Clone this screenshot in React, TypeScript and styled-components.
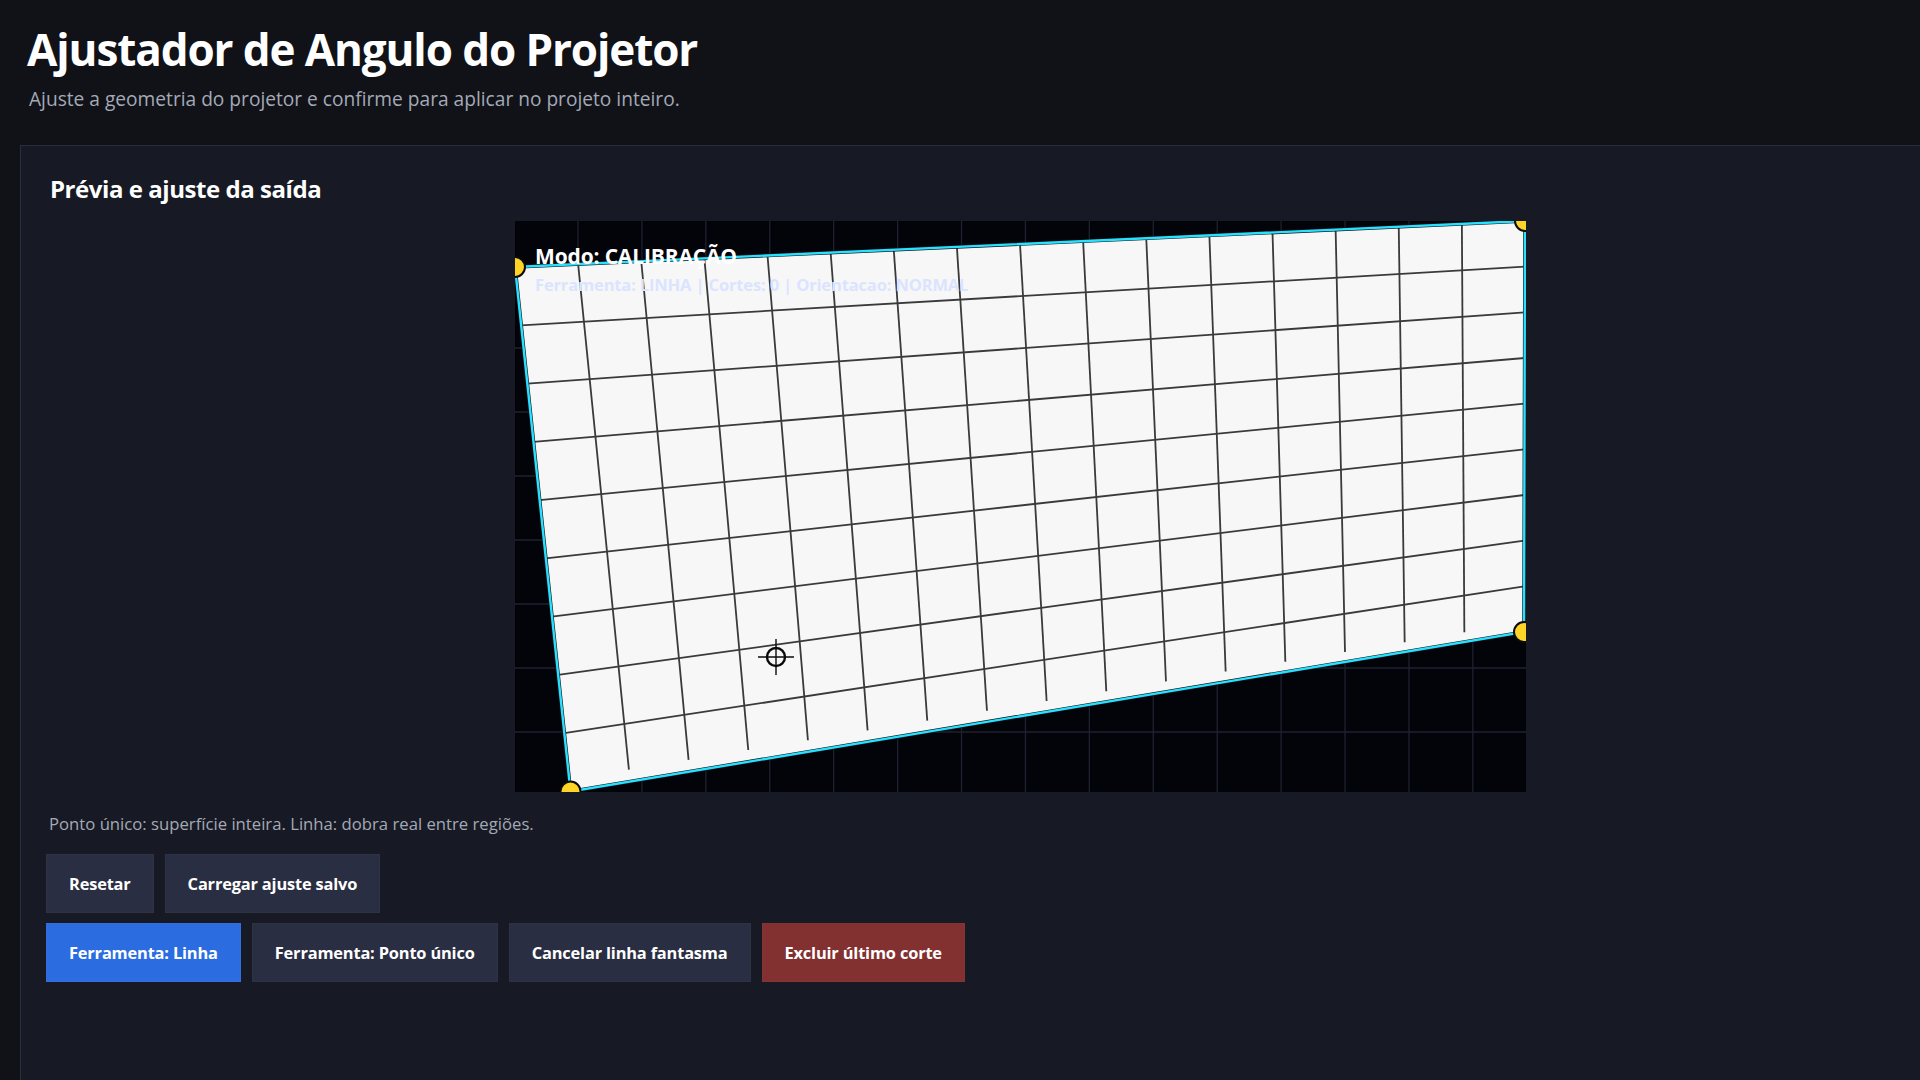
import React from "react";
import styled, { createGlobalStyle } from "styled-components";

const Global = createGlobalStyle`
  html, body { margin: 0; padding: 0; width: 100%; height: 100%; overflow: hidden; background: #101218; }
  body { font-family: "Open Sans", "Noto Sans", "Liberation Sans", sans-serif; color: #fff; }
  #root { width: 100%; height: 100%; }
`;

const Page = styled.div`
  width: 100%;
  height: 100%;
  overflow: hidden;
  background: #101218;
`;

const Header = styled.header`
  height: 145px;
  box-sizing: border-box;
  padding: 22px 0 0 27px;
`;

const Title = styled.h1`
  margin: 0;
  font-size: 44px;
  line-height: 54px;
  font-weight: 700;
  color: #fff;
  letter-spacing: -1.1px;
  white-space: nowrap;
`;

const Subtitle = styled.p`
  margin: 10px 0 0 2px;
  font-size: 19.15px;
  line-height: 26px;
  color: #a4a9b6;
  white-space: nowrap;
`;

const Panel = styled.section`
  margin-left: 20px;
  width: 2001px;
  min-height: 1000px;
  box-sizing: border-box;
  background: #171a24;
  border: 1px solid #2a2e3d;
  padding: 27px 25px;
`;

const PanelTitle = styled.h2`
  margin: 0 0 16px 4px;
  font-size: 24px;
  line-height: 32px;
  font-weight: 700;
  letter-spacing: -0.45px;
  color: #fff;
  white-space: nowrap;
`;

const Stage = styled.div`
  position: relative;
  width: 1011px;
  height: 571px;
  margin: 0 auto;
  background: #03040a;
  overflow: hidden;
`;

const StageSvg = styled.svg`
  display: block;
  width: 100%;
  height: 100%;
`;

const Overlay = styled.div`
  position: absolute;
  left: 20px;
  top: 22px;
  white-space: nowrap;
`;

const Mode = styled.div`
  font-size: 21px;
  line-height: 27px;
  font-weight: 700;
  letter-spacing: -0.15px;
  color: #fff;
`;

const Status = styled.div`
  margin-top: 3px;
  font-size: 16.5px;
  line-height: 23px;
  font-weight: 700;
  letter-spacing: -0.15px;
  color: #dbe4ff;
`;

const Hint = styled.p`
  margin: 21px 0 19px 3px;
  font-size: 16.7px;
  line-height: 22px;
  color: #a4a9b6;
  white-space: nowrap;
`;

const Actions = styled.div`
  display: flex;
  flex-direction: column;
  gap: 10px;
`;

const Row = styled.div`
  display: flex;
  gap: 11px;
`;

const tones = {
  neutral: "#2a2e42",
  primary: "#2b6de0",
  danger: "#823030",
};

const Button = styled.button<{ $tone?: keyof typeof tones }>`
  height: 59px;
  box-sizing: border-box;
  padding: 0 22px;
  border: 1px solid rgba(255, 255, 255, 0.02);
  border-radius: 0;
  background: ${(p) => tones[p.$tone ?? "neutral"]};
  color: #fff;
  font-family: inherit;
  font-size: 16.4px;
  font-weight: 700;
  letter-spacing: -0.17px;
  white-space: nowrap;
`;

const Q = {
  tl: [0, 46],
  tr: [1010, 0],
  br: [1009, 411],
  bl: [55.5, 570.5],
};

const lerp = (a: number[], b: number[], t: number) => [a[0] + (b[0] - a[0]) * t, a[1] + (b[1] - a[1]) * t];
const at = (u: number, v: number) => lerp(lerp(Q.tl, Q.tr, u), lerp(Q.bl, Q.br, u), v);

const COLS = 16;
const ROWS = 9;
const range = (n: number) => Array.from({ length: n }, (_, i) => i);

const Projection = () => {
  const quad = [Q.tl, Q.tr, Q.br, Q.bl].map((p) => p.join(",")).join(" ");
  return (
    <StageSvg viewBox="0 0 1011 571">
      <g stroke="#1e2230" strokeWidth="1.3">
        {range(15).map((i) => (
          <line key={i} x1={63 + i * 63.92} y1="0" x2={63 + i * 63.92} y2="571" />
        ))}
        {range(8).map((i) => (
          <line key={i} x1="0" y1={63 + i * 64} x2="1011" y2={63 + i * 64} />
        ))}
      </g>
      <polygon points={quad} fill="#f7f7f7" />
      <g stroke="#3a3a3a" strokeWidth="1.8">
        {range(COLS - 1).map((i) => {
          const a = at((i + 1) / COLS, 0);
          const b = at((i + 1) / COLS, 0.977);
          return <line key={i} x1={a[0]} y1={a[1]} x2={b[0]} y2={b[1]} />;
        })}
        {range(ROWS - 1).map((i) => {
          const a = at(0, (i + 1) / ROWS);
          const b = at(1, (i + 1) / ROWS);
          return <line key={i} x1={a[0]} y1={a[1]} x2={b[0]} y2={b[1]} />;
        })}
      </g>
      <polygon points={quad} fill="none" stroke="#0c1218" strokeWidth="3.6" />
      <polygon points={quad} fill="none" stroke="#2ae0ff" strokeWidth="2.4" />
      {[Q.tl, Q.tr, Q.br, Q.bl].map((p, i) => (
        <circle key={i} cx={p[0]} cy={p[1]} r="10" fill="#ffd426" stroke="#0b0b0b" strokeWidth="2" />
      ))}
      <g fill="none" stroke="#0b0b0b" transform="translate(261 436)">
        <circle r="9" strokeWidth="2.4" />
        <path d="M-18 0H18M0-18V18" strokeWidth="1.4" />
      </g>
    </StageSvg>
  );
};

export default function App() {
  return (
    <Page>
      <Global />
      <Header>
        <Title>Ajustador de Angulo do Projetor</Title>
        <Subtitle>Ajuste a geometria do projetor e confirme para aplicar no projeto inteiro.</Subtitle>
      </Header>
      <Panel>
        <PanelTitle>Prévia e ajuste da saída</PanelTitle>
        <Stage>
          <Projection />
          <Overlay>
            <Mode>Modo: CALIBRAÇÃO</Mode>
            <Status>Ferramenta: LINHA | Cortes: 0 | Orientacao: NORMAL</Status>
          </Overlay>
        </Stage>
        <Hint>Ponto único: superfície inteira. Linha: dobra real entre regiões.</Hint>
        <Actions>
          <Row>
            <Button>Resetar</Button>
            <Button>Carregar ajuste salvo</Button>
          </Row>
          <Row>
            <Button $tone="primary">Ferramenta: Linha</Button>
            <Button>Ferramenta: Ponto único</Button>
            <Button>Cancelar linha fantasma</Button>
            <Button $tone="danger">Excluir último corte</Button>
          </Row>
        </Actions>
      </Panel>
    </Page>
  );
}
